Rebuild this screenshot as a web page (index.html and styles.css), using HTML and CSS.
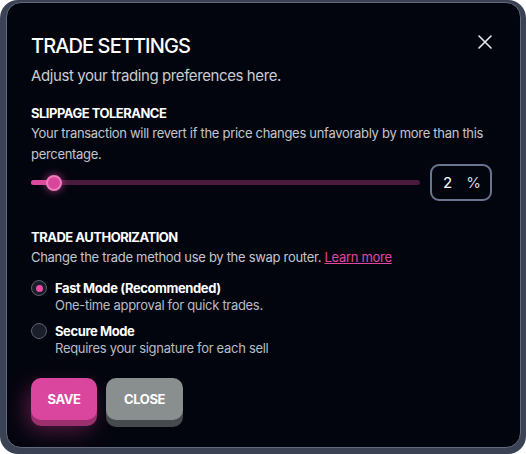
FILE: index.html
```html
<!DOCTYPE html>
<html lang="en">
<head>
    <meta charset="UTF-8">
    <meta name="viewport" content="width=device-width, initial-scale=1.0">
    <title>Trade Settings</title>
    <link rel="stylesheet" href="styles.css">
</head>
<body>
    <div class="modal-frame">
        <div class="modal">
            <!-- Header -->
            <div class="modal-header">
                <h2>TRADE SETTINGS</h2>
                <button class="close-icon" aria-label="Close">
                    <svg width="14" height="14" viewBox="0 0 14 14">
                        <path d="M1 1 L13 13 M13 1 L1 13" stroke="#e8eaee" stroke-width="1.6" stroke-linecap="round"/>
                    </svg>
                </button>
            </div>
            <p class="subtitle">Adjust your trading preferences here.</p>

            <!-- Slippage -->
            <div class="section">
                <h3>SLIPPAGE TOLERANCE</h3>
                <p class="hint">Your transaction will revert if the price changes unfavorably by more than this percentage.</p>
                <div class="slider-row">
                    <div class="slider">
                        <div class="slider-fill" style="width: 23px;"></div>
                        <div class="slider-thumb" style="left: 23px;"></div>
                    </div>
                    <div class="percent-box">
                        <span class="value">2</span>
                        <span class="unit">%</span>
                    </div>
                </div>
            </div>

            <!-- Authorization -->
            <div class="section auth">
                <h3>TRADE AUTHORIZATION</h3>
                <p class="hint">Change the trade method use by the swap router. <a href="#" class="link">Learn more</a></p>

                <div class="option">
                    <span class="radio checked"></span>
                    <div>
                        <div class="option-title">Fast Mode (Recommended)</div>
                        <div class="option-desc">One-time approval for quick trades.</div>
                    </div>
                </div>
                <div class="option">
                    <span class="radio"></span>
                    <div>
                        <div class="option-title">Secure Mode</div>
                        <div class="option-desc">Requires your signature for each sell</div>
                    </div>
                </div>
            </div>

            <div class="actions">
                <button class="btn btn-save">SAVE</button>
                <button class="btn btn-close">CLOSE</button>
            </div>
        </div>
    </div>
</body>
</html>
```

FILE: styles.css
```css
* {
    box-sizing: border-box;
}

body {
    margin: 0;
    padding: 0;
    background-color: #fff;
    font-family: Inter, "Liberation Sans", Arial, sans-serif;
    color: #fff;
}

.modal-frame {
    width: 526px;
    height: 454px;
    padding: 2px 5px 6px 6px;
    background-color: #3a4254;
    border-radius: 18px;
}

.modal {
    height: 100%;
    padding: 30px 28px 0 24px;
    background-color: #03050e;
    border: 1px solid #626b7e;
    border-radius: 15px;
}

.modal-header {
    display: flex;
    justify-content: space-between;
    align-items: flex-start;
}

.modal-header h2 {
    margin: 0;
    font-size: 20px;
    font-weight: 500;
    letter-spacing: -0.9px;
    line-height: 26px;
}

.close-icon {
    background: none;
    border: none;
    padding: 0;
    margin-top: 2px;
    cursor: pointer;
    display: flex;
}

.subtitle {
    margin: 7px 0 0;
    font-size: 15px;
    color: #c9ccd3;
    letter-spacing: -0.4px;
}

.section {
    margin-top: 19px;
}

.section h3 {
    margin: 0;
    font-size: 13px;
    font-weight: 700;
    letter-spacing: -0.5px;
    line-height: 18px;
}

.hint {
    margin: 1px 0 0;
    font-size: 13px;
    line-height: 21px;
    color: #c3c6ce;
    letter-spacing: -0.3px;
}

.link {
    color: #e0479f;
    text-decoration: underline;
}

.slider-row {
    display: flex;
    align-items: center;
    gap: 10px;
    margin-top: -1px;
}

.slider {
    position: relative;
    flex: 1;
    height: 5px;
    background-color: #4a1a3d;
    border-radius: 3px;
}

.slider-fill {
    height: 100%;
    background-color: #dc4a9d;
    border-radius: 3px;
}

.slider-thumb {
    position: absolute;
    top: 50%;
    width: 16px;
    height: 16px;
    margin: -8px 0 0 -8px;
    border-radius: 50%;
    background-color: #d9479a;
    border: 2px solid #f07cbd;
    box-shadow: 0 0 8px rgba(230, 80, 170, 0.7);
}

.percent-box {
    display: flex;
    justify-content: space-between;
    align-items: center;
    width: 62px;
    height: 37px;
    padding: 0 9px 0 11px;
    border: 2px solid #6a7590;
    border-radius: 9px;
    font-size: 15px;
}

.percent-box .unit {
    color: #d5d8de;
}

.auth {
    margin-top: 27px;
}

.option {
    display: flex;
    align-items: flex-start;
    gap: 8px;
    margin-top: 12px;
}

.option + .option {
    margin-top: 9px;
}

.radio {
    flex: none;
    position: relative;
    width: 16px;
    height: 16px;
    border-radius: 50%;
    border: 1.5px solid #5a6070;
    background-color: #1a1d2a;
}

.radio.checked::after {
    content: "";
    position: absolute;
    top: 50%;
    left: 50%;
    width: 7px;
    height: 7px;
    margin: -3.5px 0 0 -3.5px;
    border-radius: 50%;
    background-color: #ee4aa6;
}

.option-title {
    font-size: 13px;
    font-weight: 700;
    letter-spacing: -0.4px;
    line-height: 16px;
}

.option-desc {
    font-size: 13px;
    color: #b9bcc4;
    letter-spacing: -0.3px;
    line-height: 18px;
}

.actions {
    display: flex;
    gap: 9px;
    margin-top: 21px;
}

.btn {
    height: 42px;
    border: none;
    border-radius: 10px;
    color: #fff;
    font-family: inherit;
    font-size: 13px;
    font-weight: 700;
    letter-spacing: -0.4px;
    cursor: pointer;
}

.btn-save {
    width: 66px;
    background-color: #da469d;
    box-shadow: 0 6px 0 #9c2f6e, -4px 10px 22px rgba(214, 60, 150, 0.4);
}

.btn-close {
    width: 77px;
    background-color: #898e8f;
    box-shadow: 0 7px 0 #464a4c;
}
```
